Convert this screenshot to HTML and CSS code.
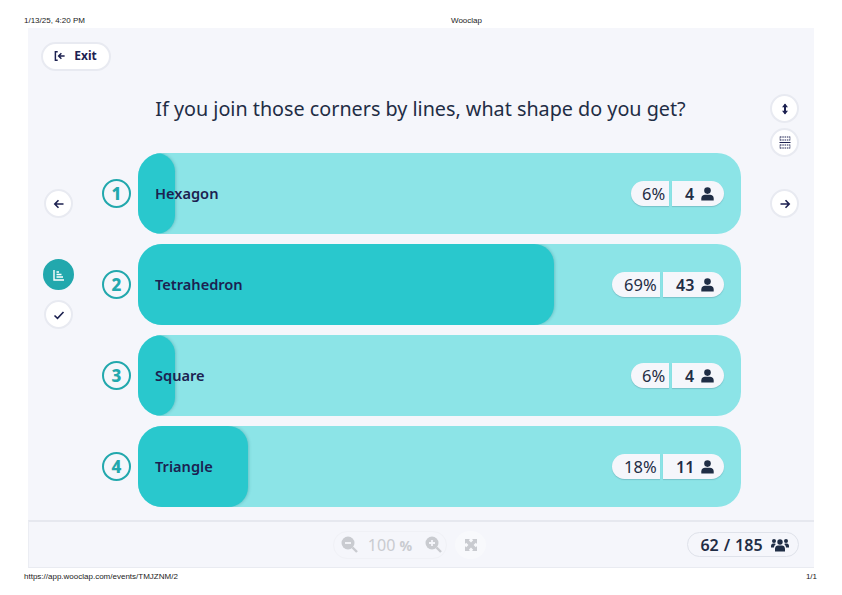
FILE: index.html
```html
<!DOCTYPE html>
<html lang="en">
<head>
    <meta charset="UTF-8">
    <title>Wooclap</title>
    <link rel="stylesheet" href="styles.css">
</head>
<body>
<div class="print-line print-head">
    <span class="print-date">1/13/25, 4:20 PM</span>
    <span class="print-title">Wooclap</span>
</div>

<div class="panel">
    <div class="top">
        <button class="exit">
            <svg width="12" height="12" viewBox="0 0 13 12"><path d="M4 1.500H1.500v9H4M11.500 6H5M8 3 5 6l3 3" fill="none" stroke="#1c2150" stroke-width="1.600"/></svg>
            <span class="exit-text">Exit</span>
        </button>
    </div>

    <div class="stage">
        <div class="rail rail-left">
            <button class="round">
                <svg width="12" height="12" viewBox="0 0 12 12"><path d="M10.500 6H2M5.500 2.200 1.800 6l3.700 3.800" fill="none" stroke="#1c2150" stroke-width="1.600"/></svg>
            </button>
            <button class="round round-on">
                <svg width="12" height="12" viewBox="0 0 12 12"><path d="M1 1v10h10M3.500 3h2.500M3.500 5.500h5M3.500 8h6.500" fill="none" stroke="#fff" stroke-width="1.400"/></svg>
            </button>
            <button class="round">
                <svg width="12" height="12" viewBox="0 0 12 12"><path d="M1.500 6.500 4.500 9.300 10.500 3" fill="none" stroke="#1c2150" stroke-width="1.600"/></svg>
            </button>
        </div>

        <div class="center">
            <h1 class="question">If you join those corners by lines, what shape do you get?</h1>
            <div class="answers">
                <div class="answer">
                    <div class="num">1</div>
                    <div class="bar">
                        <div class="fill" style="width: 6.1%"></div>
                        <span class="label">Hexagon</span>
                        <div class="stats">
                            <span class="pct">6%</span>
                            <span class="cnt">4
                                <svg width="13" height="14" viewBox="0 0 13 14"><circle cx="6.500" cy="3.600" r="3.300" fill="#1f2d45"/><path d="M0.300 13.500V11.500C0.300 9 2 7.800 4 7.800h5c2 0 3.700 1.200 3.700 3.700v2z" fill="#1f2d45"/></svg>
                            </span>
                        </div>
                    </div>
                </div>
                <div class="answer">
                    <div class="num">2</div>
                    <div class="bar">
                        <div class="fill" style="width: 69%"></div>
                        <span class="label">Tetrahedron</span>
                        <div class="stats">
                            <span class="pct pct-wide">69%</span>
                            <span class="cnt cnt-wide">43
                                <svg width="13" height="14" viewBox="0 0 13 14"><circle cx="6.500" cy="3.600" r="3.300" fill="#1f2d45"/><path d="M0.300 13.500V11.500C0.300 9 2 7.800 4 7.800h5c2 0 3.700 1.200 3.700 3.700v2z" fill="#1f2d45"/></svg>
                            </span>
                        </div>
                    </div>
                </div>
                <div class="answer">
                    <div class="num">3</div>
                    <div class="bar">
                        <div class="fill" style="width: 6.1%"></div>
                        <span class="label">Square</span>
                        <div class="stats">
                            <span class="pct">6%</span>
                            <span class="cnt">4
                                <svg width="13" height="14" viewBox="0 0 13 14"><circle cx="6.500" cy="3.600" r="3.300" fill="#1f2d45"/><path d="M0.300 13.500V11.500C0.300 9 2 7.800 4 7.800h5c2 0 3.700 1.200 3.700 3.700v2z" fill="#1f2d45"/></svg>
                            </span>
                        </div>
                    </div>
                </div>
                <div class="answer">
                    <div class="num">4</div>
                    <div class="bar">
                        <div class="fill" style="width: 18.2%"></div>
                        <span class="label">Triangle</span>
                        <div class="stats">
                            <span class="pct pct-wide">18%</span>
                            <span class="cnt cnt-wide">11
                                <svg width="13" height="14" viewBox="0 0 13 14"><circle cx="6.500" cy="3.600" r="3.300" fill="#1f2d45"/><path d="M0.300 13.500V11.500C0.300 9 2 7.800 4 7.800h5c2 0 3.700 1.200 3.700 3.700v2z" fill="#1f2d45"/></svg>
                            </span>
                        </div>
                    </div>
                </div>
            </div>
        </div>

        <div class="rail rail-right">
            <button class="round">
                <svg width="12" height="12" viewBox="0 0 12 12"><path d="M6 1.500v9" stroke="#1c2150" stroke-width="2"/><path d="M3 4.200 6 .6 9 4.200zM3 7.800 6 11.400 9 7.800z" fill="#1c2150"/></svg>
            </button>
            <button class="round">
                <svg width="12" height="13" viewBox="0 0 12 13"><path d="M.5 6.500h11" stroke="#1c2150" stroke-width="1"/><path d="M1 1h10M1 4h10M1 9h10M1 12h10" stroke="#1c2150" stroke-width="1" stroke-dasharray="1.500 .8"/><path d="M1 .5v4M11 .5v4M1 8.500v4M11 8.500v4" stroke="#1c2150" stroke-width=".5"/></svg>
            </button>
            <button class="round nav-next">
                <svg width="12" height="12" viewBox="0 0 12 12"><path d="M1.500 6H10M6.500 2.200 10.200 6l-3.700 3.800" fill="none" stroke="#1c2150" stroke-width="1.600"/></svg>
            </button>
        </div>
    </div>

    <div class="footer">
        <div class="zoom">
            <svg width="18" height="18" viewBox="0 0 18 18"><circle cx="7" cy="7" r="6.500" fill="#c9cbd0"/><path d="M4 7h6" stroke="#f5f6fb" stroke-width="1.800"/><path d="M11.500 11.500 16 16" stroke="#c9cbd0" stroke-width="2.400"/></svg>
            <span class="zoom-val">100 <b>%</b></span>
            <svg width="18" height="18" viewBox="0 0 18 18"><circle cx="7" cy="7" r="6.500" fill="#c9cbd0"/><path d="M4 7h6M7 4v6" stroke="#f5f6fb" stroke-width="1.800"/><path d="M11.500 11.500 16 16" stroke="#c9cbd0" stroke-width="2.400"/></svg>
        </div>
        <div class="full">
            <svg width="12" height="12" viewBox="0 0 12 12"><path d="M0 0h5L3.800 1.200 6 3.400 8.200 1.200 7 0h5v5L10.800 3.800 8.600 6l2.200 2.200L12 7v5H7l1.200-1.200L6 8.600 3.800 10.800 5 12H0V7l1.200 1.200L3.400 6 1.200 3.800 0 5z" fill="#c9cbd0"/></svg>
        </div>
        <div class="total">
            <span>62</span><span>/</span><span>185</span>
            <svg width="18" height="14" viewBox="0 0 18 14"><g fill="#1f2d45"><circle cx="9" cy="4" r="2.700"/><circle cx="3" cy="3" r="2"/><circle cx="15" cy="3" r="2"/><path d="M4 13.500v-2.500C4 8.500 5.500 7.500 7 7.500h4c1.500 0 3 1 3 3.500v2.500zM0 9.500V8c0-1.500 1-2.500 2-2.500h2.200L4.500 6.500C3.500 7.300 3 8.300 3 9.500zM18 9.500V8c0-1.500-1-2.500-2-2.500h-2.200L13.500 6.500c1 .8 1.500 1.800 1.500 3z"/></g></svg>
        </div>
    </div>
</div>

<div class="print-line print-foot">
    <span>https://app.wooclap.com/events/TMJZNM/2</span>
    <span>1/1</span>
</div>
</body>
</html>
```

FILE: styles.css
```css
* {
    box-sizing: border-box;
}

html, body {
    height: 595px;
    overflow: hidden;
}

body {
    margin: 0;
    background: #fff;
    font-family: "Noto Sans", sans-serif;
    color: #1c2150;
}

button {
    font-family: inherit;
    padding: 0;
}

.print-line {
    display: flex;
    justify-content: space-between;
    font-family: "Liberation Sans", Arial, sans-serif;
    font-size: 8px;
    color: #222;
    white-space: nowrap;
}

.print-head {
    height: 28px;
    padding: 16px 25px 0 24px;
    line-height: 9px;
    justify-content: flex-start;
}

.print-date {
    width: 60px;
}

.print-title {
    margin-left: 367px;
}

.print-foot {
    height: 27px;
    padding: 4px 25px 0 24px;
    line-height: 9px;
}

.panel {
    margin: 0 28px;
    height: 540px;
    display: flex;
    flex-direction: column;
    background: #f5f6fb;
}

.top {
    height: 43px;
    padding: 14px 0 0 13px;
}

.exit {
    width: 70px;
    height: 29px;
    display: flex;
    align-items: center;
    justify-content: center;
    gap: 8px;
    padding: 0 1px 1px 0;
    background: #fff;
    border: 2px solid #e8eaf1;
    border-radius: 15px;
    color: #1c2150;
    font-size: 12px;
    line-height: 14px;
    font-weight: 700;
}

.stage {
    height: 449px;
    display: flex;
}

.rail {
    display: flex;
    flex-direction: column;
    align-items: flex-start;
}

.rail-left {
    width: 72px;
    padding: 118px 0 0 16px;
}

.rail-right {
    width: 73px;
    padding: 23px 0 0 29px;
    gap: 5px;
}

.round {
    width: 29px;
    height: 29px;
    display: flex;
    align-items: center;
    justify-content: center;
    background: #fff;
    border: 2px solid #e8eaf1;
    border-radius: 50%;
}

.round-on {
    width: 31px;
    height: 31px;
    background: #22a8ad;
    border-color: #22a8ad;
    margin: 41px 0 10px -1px;
}

.nav-next {
    margin-top: 27px;
}

.center {
    flex: 1;
    min-width: 0;
}

.question {
    margin: 0;
    height: 82px;
    padding-top: 24px;
    text-align: center;
    font-size: 19.75px;
    line-height: 27px;
    font-weight: 400;
    color: #1f2d45;
}

.answers {
    display: flex;
    flex-direction: column;
    gap: 10px;
}

.answer {
    display: flex;
    align-items: center;
    gap: 7px;
    padding-left: 2px;
}

.num {
    width: 29px;
    height: 29px;
    flex: none;
    display: flex;
    align-items: center;
    justify-content: center;
    border: 2px solid #22a8ad;
    border-radius: 50%;
    color: #22a8ad;
    font-size: 17px;
    font-weight: 800;
}

.bar {
    position: relative;
    flex: 1;
    height: 81px;
    display: flex;
    align-items: center;
    justify-content: space-between;
    padding: 0 17px;
    background: #8ce4e7;
    border-radius: 24px;
    overflow: hidden;
}

.fill {
    position: absolute;
    left: 0;
    top: 0;
    bottom: 0;
    background: #29c8cd;
    border-radius: 20px;
    box-shadow: 1px 0 3px rgba(30, 120, 125, 0.3);
}

.label {
    position: relative;
    top: -1px;
    font-size: 14.6px;
    font-weight: 600;
    color: #1c2150;
}

.stats {
    position: relative;
    display: flex;
    gap: 3px;
    height: 25px;
    font-size: 16.5px;
    color: #1f2d45;
}

.pct, .cnt {
    display: flex;
    align-items: center;
    background: #f5f6fb;
    box-shadow: 0 1px 1px rgba(60, 90, 110, 0.25);
}

.pct {
    width: 38px;
    padding-left: 11px;
    border-radius: 13px 0 0 13px;
}

.pct-wide {
    width: 48px;
    padding-left: 12px;
}

.cnt {
    width: 52px;
    padding-left: 13px;
    gap: 7px;
    font-size: 16px;
    font-weight: 600;
    border-radius: 0 13px 13px 0;
}

.cnt-wide {
    width: 61px;
    padding-left: 13px;
}

.footer {
    flex: 1;
    display: flex;
    align-items: center;
    padding: 0 15px 0 304px;
    border-top: 2px solid #e6e8ef;
    border-bottom: 1px solid #e9ebf1;
    border-left: 1px solid #ebedf3;
}

.zoom {
    width: 114px;
    height: 28px;
    display: flex;
    align-items: center;
    justify-content: space-between;
    padding: 0 3px 0 7px;
    border: 1px solid #f0f1f6;
    border-radius: 14px;
}

.zoom-val {
    margin-right: 4px;
    color: #c9cbd0;
    font-size: 16px;
}

.zoom-val b {
    font-size: 14px;
}

.full {
    width: 31px;
    height: 28px;
    margin-left: 8px;
    display: flex;
    align-items: center;
    justify-content: center;
    background: #f8f9fc;
    border-radius: 50%;
}

.total {
    width: 112px;
    height: 25px;
    margin-left: auto;
    display: flex;
    align-items: center;
    justify-content: center;
    gap: 5px;
    padding-left: 3px;
    border: 1px solid #dfe2ea;
    border-radius: 13px;
    font-size: 16px;
    font-weight: 600;
    color: #1f2d45;
}

.total svg {
    margin-left: 3px;
}
```
